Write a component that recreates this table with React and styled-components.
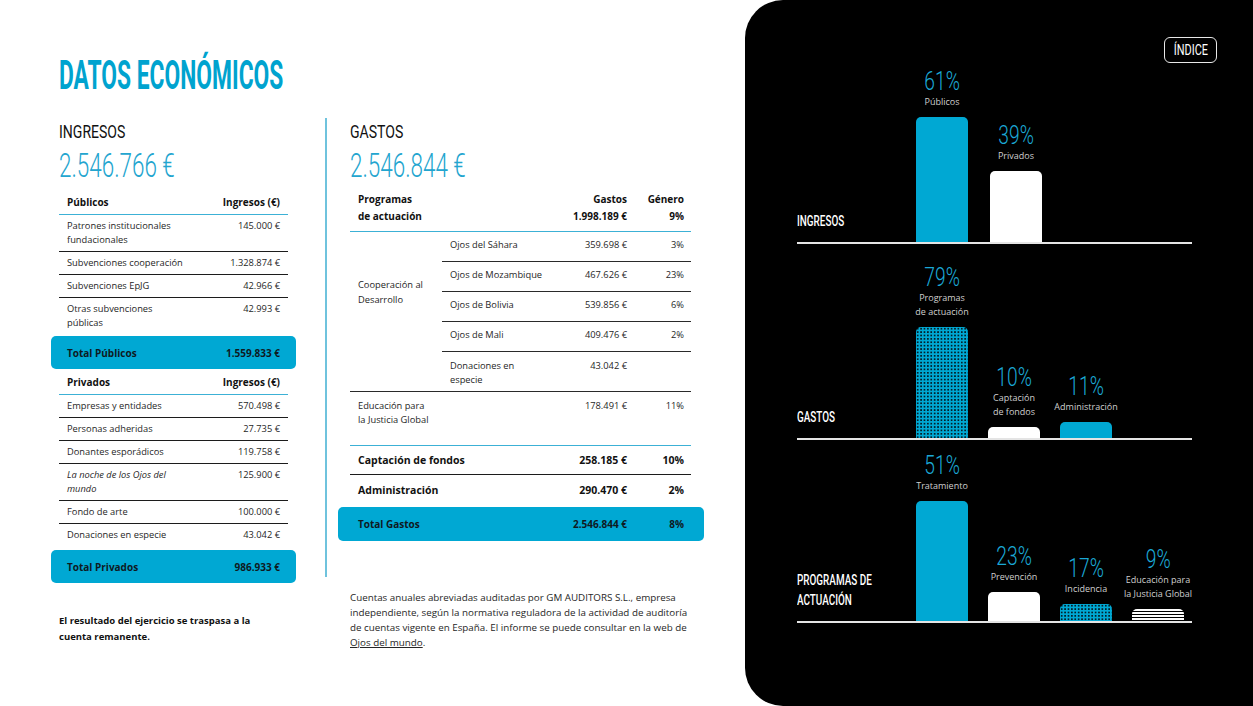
import React from 'react';
import styled, { createGlobalStyle, css } from 'styled-components';

const BLUE = '#00a8d3';
const INK = '#262626';

const GlobalStyle = createGlobalStyle`
  html, body {
    margin: 0;
    padding: 0;
    background: #fff;
  }
  body {
    font-family: 'Open Sans', 'Liberation Sans', sans-serif;
    color: ${INK};
  }
`;

const ingresos = {
  publicos: [
    { name: ['Patrones institucionales', 'fundacionales'], value: '145.000 €' },
    { name: ['Subvenciones cooperación'], value: '1.328.874 €' },
    { name: ['Subvenciones EpJG'], value: '42.966 €' },
    { name: ['Otras subvenciones', 'públicas'], value: '42.993 €', last: true },
  ],
  privados: [
    { name: ['Empresas y entidades'], value: '570.498 €' },
    { name: ['Personas adheridas'], value: '27.735 €' },
    { name: ['Donantes esporádicos'], value: '119.758 €' },
    { name: ['La noche de los Ojos del', 'mundo'], value: '125.900 €', italic: true },
    { name: ['Fondo de arte'], value: '100.000 €' },
    { name: ['Donaciones en especie'], value: '43.042 €', last: true },
  ],
};

const cooperacion = [
  { name: 'Ojos del Sáhara', value: '359.698 €', pct: '3%' },
  { name: 'Ojos de Mozambique', value: '467.626 €', pct: '23%' },
  { name: 'Ojos de Bolivia', value: '539.856 €', pct: '6%' },
  { name: 'Ojos de Mali', value: '409.476 €', pct: '2%' },
];

const charts = [
  {
    title: ['INGRESOS'],
    height: 181,
    gap: 22,
    bars: [
      { pct: '61%', name: ['Públicos'], h: 125, fill: 'blue' },
      { pct: '39%', name: ['Privados'], h: 71, fill: 'white' },
    ],
  },
  {
    title: ['GASTOS'],
    height: 196,
    gap: 20,
    bars: [
      { pct: '79%', name: ['Programas', 'de actuación'], h: 111, fill: 'dots' },
      { pct: '10%', name: ['Captación', 'de fondos'], h: 11, fill: 'white' },
      { pct: '11%', name: ['Administración'], h: 16, fill: 'blue' },
    ],
  },
  {
    title: ['PROGRAMAS DE', 'ACTUACIÓN'],
    height: 183,
    gap: 20,
    bars: [
      { pct: '51%', name: ['Tratamiento'], h: 120, fill: 'blue' },
      { pct: '23%', name: ['Prevención'], h: 29, fill: 'white' },
      { pct: '17%', name: ['Incidencia'], h: 17, fill: 'dots' },
      { pct: '9%', name: ['Educación para', 'la Justicia Global'], h: 12, fill: 'stripes' },
    ],
  },
];

function Lines({ lines }) {
  return lines.map((line, i) => (
    <React.Fragment key={i}>
      {i > 0 && <br />}
      {line}
    </React.Fragment>
  ));
}

export default function App() {
  return (
    <>
      <GlobalStyle />
      <Page>
        <Left>
          <Title>DATOS ECONÓMICOS</Title>
          <Columns>
            <IngresosCol>
              <Heading>INGRESOS</Heading>
              <Amount>2.546.766 €</Amount>

              <Table $mt={6}>
                <HeadRow>
                  <span>Públicos</span>
                  <span>Ingresos (€)</span>
                </HeadRow>
                {ingresos.publicos.map((row) => (
                  <Row key={row.value} $last={row.last}>
                    <span>
                      <Lines lines={row.name} />
                    </span>
                    <span>{row.value}</span>
                  </Row>
                ))}
              </Table>
              <TotalBox $mt={2}>
                <span>Total Públicos</span>
                <span>1.559.833 €</span>
              </TotalBox>

              <Table $mt={0}>
                <HeadRow>
                  <span>Privados</span>
                  <span>Ingresos (€)</span>
                </HeadRow>
                {ingresos.privados.map((row) => (
                  <Row key={row.value} $last={row.last}>
                    <RowName $italic={row.italic}>
                      <Lines lines={row.name} />
                    </RowName>
                    <span>{row.value}</span>
                  </Row>
                ))}
              </Table>
              <TotalBox $mt={4}>
                <span>Total Privados</span>
                <span>986.933 €</span>
              </TotalBox>

              <LeftNote>
                El resultado del ejercicio se traspasa a la
                <br />
                cuenta remanente.
              </LeftNote>
            </IngresosCol>

            <Divider />

            <GastosCol>
              <Heading>GASTOS</Heading>
              <Amount>2.546.844 €</Amount>

              <GTable>
                <HeadCell>
                  Programas
                  <br />
                  de actuación
                </HeadCell>
                <HeadCell />
                <HeadCell $right>
                  Gastos
                  <br />
                  1.998.189 €
                </HeadCell>
                <HeadCell $right $pr={7}>
                  Género
                  <br />
                  9%
                </HeadCell>

                <GroupCell>
                  Cooperación al
                  <br />
                  Desarrollo
                </GroupCell>
                {cooperacion.map((row) => (
                  <React.Fragment key={row.name}>
                    <SubCell>{row.name}</SubCell>
                    <SubCell $right>{row.value}</SubCell>
                    <SubCell $right $pr={7}>
                      {row.pct}
                    </SubCell>
                  </React.Fragment>
                ))}

                <SubCell $tall />
                <SubCell $tall>
                  Donaciones en
                  <br />
                  especie
                </SubCell>
                <SubCell $tall $right>
                  43.042 €
                </SubCell>
                <SubCell $tall />

                <EduCell $span={2}>
                  Educación para
                  <br />
                  la Justicia Global
                </EduCell>
                <EduCell $right>178.491 €</EduCell>
                <EduCell $right $pr={7}>
                  11%
                </EduCell>

                <BigCell $span={2} $line>
                  Captación de fondos
                </BigCell>
                <BigCell $right $line>
                  258.185 €
                </BigCell>
                <BigCell $right $pr={7} $line>
                  10%
                </BigCell>

                <BigCell $span={2}>Administración</BigCell>
                <BigCell $right>290.470 €</BigCell>
                <BigCell $right $pr={7}>
                  2%
                </BigCell>
              </GTable>

              <GTotal>
                <GTotalLabel>Total Gastos</GTotalLabel>
                <GTotalValue>2.546.844 €</GTotalValue>
                <GTotalValue $pr={7}>8%</GTotalValue>
              </GTotal>

              <Note>
                Cuentas anuales abreviadas auditadas por GM AUDITORS S.L., empresa
                <br />
                independiente, según la normativa reguladora de la actividad de auditoría
                <br />
                de cuentas vigente en España. El informe se puede consultar en la web de
                <br />
                <NoteLink href="#">Ojos del mundo</NoteLink>.
              </Note>
            </GastosCol>
          </Columns>
        </Left>

        <Panel>
          <TopBar>
            <IndexButton>
              <span>ÍNDICE</span>
            </IndexButton>
          </TopBar>

          {charts.map((chart) => (
            <Chart key={chart.title[0]} $h={chart.height}>
              <ChartLabel>
                <Lines lines={chart.title} />
              </ChartLabel>
              <Bars $gap={chart.gap}>
                {chart.bars.map((bar) => (
                  <BarCol key={bar.pct + bar.name[0]}>
                    <Pct>{bar.pct}</Pct>
                    <BarName>
                      <Lines lines={bar.name} />
                    </BarName>
                    <Bar $fill={bar.fill} style={{ height: bar.h }} />
                  </BarCol>
                ))}
              </Bars>
            </Chart>
          ))}
        </Panel>
      </Page>
    </>
  );
}

const Page = styled.div`
  display: flex;
  width: 1253px;
  height: 706px;
  overflow: hidden;
`;

const Left = styled.div`
  width: 745px;
  flex-shrink: 0;
  padding: 55px 0 0 51px;
  box-sizing: border-box;
`;

const condensed = css`
  font-family: Roboto, 'Liberation Sans', sans-serif;
  transform-origin: left center;
`;

const Title = styled.h1`
  ${condensed};
  margin: 0 0 0 8px;
  font-size: 41px;
  line-height: 41px;
  font-weight: 700;
  color: #00a3cf;
  white-space: nowrap;
  transform: scaleX(0.556);
`;

const Columns = styled.div`
  display: flex;
  align-items: flex-start;
  margin-top: 22px;
`;

const IngresosCol = styled.div`
  width: 245px;
  padding-top: 4px;
`;

const GastosCol = styled.div`
  width: 366px;
  margin-left: 11px;
  padding-top: 4px;
`;

const Divider = styled.div`
  width: 2px;
  height: 459px;
  margin-left: 29px;
  background: #6fc3dd;
`;

const Heading = styled.div`
  ${condensed};
  margin-left: 8px;
  font-size: 18px;
  line-height: 20px;
  font-weight: 400;
  color: #111;
  white-space: nowrap;
  transform: scaleX(0.78);
  ${GastosCol} & {
    margin-left: 12px;
  }
`;

const Amount = styled.div`
  ${condensed};
  margin: 5px 0 0 8px;
  font-size: 34px;
  line-height: 36px;
  font-weight: 300;
  color: #23a5cf;
  white-space: nowrap;
  transform: scaleX(0.66);
  ${GastosCol} & {
    margin-left: 12px;
  }
`;

const Table = styled.div`
  margin: ${(p) => p.$mt}px 8px 0;
`;

const HeadRow = styled.div`
  display: flex;
  justify-content: space-between;
  padding: 6px 8px 5px;
  border-bottom: 1px solid #3cb1d6;
  font-size: 10px;
  line-height: 14px;
  font-weight: 700;
  color: #111;
`;

const Row = styled.div`
  display: flex;
  justify-content: space-between;
  align-items: flex-start;
  padding: 4px 8px;
  border-bottom: 1px solid #1c1c1c;
  font-size: 9.3px;
  line-height: 14px;
  color: ${INK};
  ${(p) => p.$last && 'border-bottom: none;'}
`;

const RowName = styled.span`
  font-style: ${(p) => (p.$italic ? 'italic' : 'normal')};
`;

const TotalBox = styled.div`
  display: flex;
  justify-content: space-between;
  align-items: center;
  height: 33px;
  margin-top: ${(p) => p.$mt}px;
  padding: 0 16px;
  background: ${BLUE};
  border-radius: 5px;
  font-size: 10px;
  font-weight: 700;
  color: #0f1a1f;
`;

const LeftNote = styled.p`
  margin: 30px 0 0 8px;
  font-size: 9.5px;
  line-height: 16px;
  font-weight: 700;
  color: #111;
`;

const GTable = styled.div`
  display: grid;
  grid-template-columns: 92px 118px 75px 56px;
  margin: 6px 13px 0 12px;
  font-size: 9.3px;
  line-height: 14px;
  color: ${INK};
`;

const cellBase = css`
  text-align: ${(p) => (p.$right ? 'right' : 'left')};
  padding-left: 8px;
  padding-right: ${(p) => (p.$pr != null ? p.$pr : 8)}px;
  grid-column: span ${(p) => p.$span || 1};
`;

const HeadCell = styled.div`
  ${cellBase};
  padding-top: 2px;
  padding-bottom: 6px;
  font-size: 10px;
  line-height: 17px;
  font-weight: 700;
  color: #111;
  border-bottom: 1px solid #3cb1d6;
`;

const GroupCell = styled.div`
  grid-row: span 4;
  display: flex;
  align-items: center;
  padding-left: 8px;
  line-height: 15px;
`;

const SubCell = styled.div`
  ${cellBase};
  padding-top: ${(p) => (p.$tall ? 7 : 6)}px;
  padding-bottom: ${(p) => (p.$tall ? 4 : 9)}px;
  border-bottom: 1px solid #2a2a2a;
`;

const EduCell = styled.div`
  ${cellBase};
  padding-top: 7px;
  padding-bottom: 18px;
  border-bottom: 1px solid #3cb1d6;
`;

const BigCell = styled.div`
  ${cellBase};
  padding-top: ${(p) => (p.$line ? 7 : 8)}px;
  padding-bottom: ${(p) => (p.$line ? 6 : 8)}px;
  font-size: 10.5px;
  line-height: 15px;
  font-weight: 700;
  color: #111;
  white-space: nowrap;
  border-bottom: 1px solid ${(p) => (p.$line ? '#1c1c1c' : 'transparent')};
`;

const GTotal = styled.div`
  display: grid;
  grid-template-columns: 210px 75px 56px;
  align-items: center;
  height: 34px;
  padding: 0 13px 0 12px;
  background: ${BLUE};
  border-radius: 5px;
  font-size: 10px;
  font-weight: 700;
  color: #0f1a1f;
`;

const GTotalLabel = styled.span`
  padding-left: 8px;
`;

const GTotalValue = styled.span`
  text-align: right;
  padding-right: ${(p) => (p.$pr != null ? p.$pr : 8)}px;
`;

const Note = styled.p`
  margin: 49px 0 0 12px;
  font-size: 9.8px;
  line-height: 15px;
  color: ${INK};
  white-space: nowrap;
`;

const NoteLink = styled.a`
  color: ${INK};
  text-decoration: underline;
`;

const Panel = styled.div`
  flex: 1;
  display: flex;
  flex-direction: column;
  padding: 37px 36px 0 52px;
  background: #000;
  border-radius: 38px 0 0 38px;
  color: #fff;
`;

const TopBar = styled.div`
  display: flex;
  justify-content: flex-end;
`;

const IndexButton = styled.div`
  display: flex;
  align-items: center;
  justify-content: center;
  width: 53px;
  height: 26px;
  box-sizing: border-box;
  border: 1.5px solid #e8e8e8;
  border-radius: 6px;

  span {
    ${condensed};
    transform-origin: center;
    font-size: 14px;
    line-height: 14px;
    transform: scaleX(0.78);
    white-space: nowrap;
  }
`;

const Chart = styled.div`
  display: flex;
  align-items: flex-end;
  width: 395px;
  height: ${(p) => p.$h}px;
  box-sizing: border-box;
  border-bottom: 2px solid #e4e4e4;
`;

const ChartLabel = styled.div`
  ${condensed};
  width: 119px;
  flex-shrink: 0;
  padding-bottom: 11px;
  font-size: 15px;
  line-height: 20px;
  font-weight: 500;
  white-space: nowrap;
  transform: scaleX(0.66);
`;

const Bars = styled.div`
  display: flex;
  align-items: flex-end;
  gap: ${(p) => p.$gap}px;
`;

const BarCol = styled.div`
  display: flex;
  flex-direction: column;
  align-items: center;
  width: 52px;
`;

const Pct = styled.div`
  ${condensed};
  transform-origin: center;
  font-size: 25px;
  line-height: 26px;
  font-weight: 300;
  color: #1ba8d6;
  white-space: nowrap;
  transform: scaleX(0.77);
`;

const BarName = styled.div`
  margin-bottom: 8px;
  font-size: 9px;
  line-height: 14px;
  color: #cfcfcf;
  text-align: center;
  white-space: nowrap;
`;

const fills = {
  blue: css`
    background: ${BLUE};
  `,
  white: css`
    background: #fff;
  `,
  dots: css`
    background-color: ${BLUE};
    background-image: radial-gradient(circle, #03202b 0.8px, transparent 1.2px);
    background-size: 3.4px 3.4px;
  `,
  stripes: css`
    background: repeating-linear-gradient(180deg, #fff 0 2px, #000 2px 3px);
  `,
};

const Bar = styled.div`
  width: 52px;
  border-radius: 5px 5px 0 0;
  ${(p) => fills[p.$fill]};
`;
